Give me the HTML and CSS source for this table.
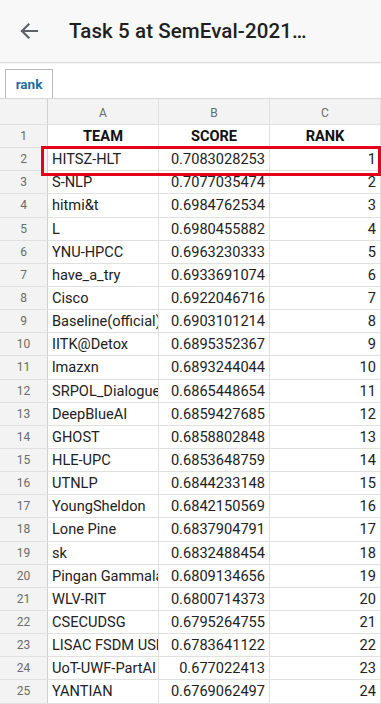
FILE: index.html
```html
<!DOCTYPE html>
<html>
<head>
<meta charset="utf-8">
<link rel="stylesheet" href="styles.css">
</head>
<body>
<header class="appbar">
  <svg class="back" width="20" height="18" viewBox="0 0 20 18"><path d="M18 9H3M9.5 2.5L3 9l6.5 6.5" fill="none" stroke="#5f6368" stroke-width="2.2" stroke-linecap="square"/></svg>
  <h1 class="title">Task 5 at SemEval-2021…</h1>
</header>
<div class="tabs"><div class="tab">rank</div></div>
<div class="sheet">
  <div class="grid" id="grid"></div>
  <div class="highlight"></div>
</div>
<script src="app.js"></script>
</body>
</html>
```
FILE: app.js
```js
const data = [
["HITSZ-HLT","0.7083028253",1],["S-NLP","0.7077035474",2],["hitmi&t","0.6984762534",3],["L","0.6980455882",4],["YNU-HPCC","0.6963230333",5],["have_a_try","0.6933691074",6],["Cisco","0.6922046716",7],["Baseline(official)","0.6903101214",8],["IITK@Detox","0.6895352367",9],["lmazxn","0.6893244044",10],["SRPOL_Dialogue","0.6865448654",11],["DeepBlueAI","0.6859427685",12],["GHOST","0.6858802848",13],["HLE-UPC","0.6853648759",14],["UTNLP","0.6844233148",15],["YoungSheldon","0.6842150569",16],["Lone Pine","0.6837904791",17],["sk","0.6832488454",18],["Pingan Gammalab","0.6809134656",19],["WLV-RIT","0.6800714373",20],["CSECUDSG","0.6795264755",21],["LISAC FSDM USMBA","0.6783641122",22],["UoT-UWF-PartAI","0.677022413",23],["YANTIAN","0.6769062497",24]
];
const g = document.getElementById('grid');
function cell(cls, text){const d=document.createElement('div');d.className=cls;d.textContent=text;g.appendChild(d);}
cell('corner','');cell('colh','A');cell('colh','B');cell('colh','C');
cell('rowh','1');cell('c head','TEAM');cell('c head','SCORE');cell('c head','RANK');
data.forEach((r,i)=>{cell('rowh',String(i+2));cell('c team',r[0]);cell('c num',r[1]);cell('c num',String(r[2]));});
```
FILE: styles.css
```css
* { box-sizing: border-box; }
html, body { margin: 0; padding: 0; background: #fff; }
body { width: 381px; height: 704px; overflow: hidden; font-family: Roboto, "Noto Sans", sans-serif; color: #202124; }
.appbar { height: 63px; background: #f8f8f8; border-bottom: 1px solid #dcdcdc; display: flex; align-items: center; padding-left: 19px; box-shadow: 0 1px 1px rgba(0,0,0,0.04); }
.back { flex: none; }
.title { margin: 0 0 0 30px; font-size: 20.5px; font-weight: 500; color: #1f1f1f; letter-spacing: 0.1px; }
.tabs { height: 35px; padding: 6px 0 0 5px; display: flex; align-items: flex-end; }
.tab { width: 48px; height: 29px; border: 1px solid #b8b8b8; border-bottom: none; color: #1d6ea6; font-weight: 700; font-size: 13.5px; display: flex; align-items: center; justify-content: center; background: #fff; }
.sheet { position: relative; }
.grid { display: grid; grid-template-columns: 48px 111px 111px 111px; grid-template-rows: 26px; grid-auto-rows: 23.15px; border-top: 1px solid #d6d6d6; }
.grid > div { border-right: 1px solid #e0e0e0; border-bottom: 1px solid #e0e0e0; overflow: hidden; white-space: nowrap; display: flex; align-items: center; }
.corner { background: #f3f3f3; border-right: 1px solid #d0d0d0 !important; }
.colh { background: #f3f3f3; color: #6b6b6b; font-size: 12px; justify-content: center; padding-top: 2px; }
.rowh { background: #f3f3f3; color: #6b6b6b; font-size: 12px; justify-content: center; border-right: 1px solid #d0d0d0 !important; }
.c { font-size: 14.6px; color: #222; }
.head { font-weight: 700; justify-content: center; color: #111; }
.team { padding-left: 4px; }
.num { justify-content: flex-end; padding-right: 4px; }
.highlight { position: absolute; left: 41px; top: 48px; width: 340px; height: 30px; border: 3px solid #e4001b; pointer-events: none; }
```
